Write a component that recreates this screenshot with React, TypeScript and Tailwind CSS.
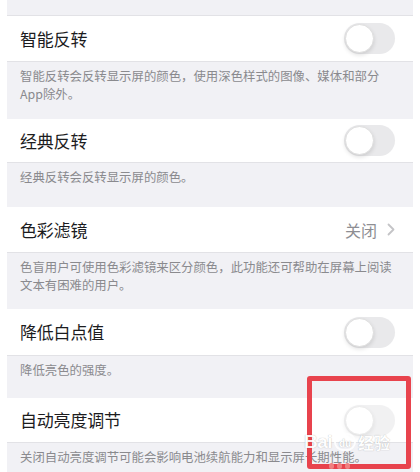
import React from "react";

const font = { fontFamily: '"Noto Sans CJK SC", "Noto Sans", sans-serif' };

function Toggle({ faded = false }: { faded?: boolean }) {
  return (
    <div
      className={`relative w-[51px] h-[31px] rounded-full bg-[#e9e9eb] ${
        faded ? "opacity-60" : ""
      }`}
    >
      <div className="absolute left-[1px] top-[1px] w-[29px] h-[29px] rounded-full bg-white border border-[#dedede] shadow-[0_2px_4px_rgba(0,0,0,0.12)]" />
    </div>
  );
}

function Row({
  title,
  height,
  right,
}: {
  title: string;
  height: string;
  right: React.ReactNode;
}) {
  return (
    <div className={`flex items-center justify-between pl-[20px] pr-[25px] bg-white ${height}`}>
      <span className="text-[17px] text-[#1c1c1e] tracking-[-0.2px]">{title}</span>
      {right}
    </div>
  );
}

function Footer({ text, height }: { text: string; height: string }) {
  return (
    <div
      className={`mx-[7px] bg-[#f1f1f5] border-t border-[#e2e2e6] pl-[13px] pr-[17px] pt-[5px] text-[12.4px] leading-[18px] text-[#8a8a8e] ${height}`}
    >
      {text}
    </div>
  );
}

export default function App() {
  return (
    <div className="relative w-[420px] h-[472px] overflow-hidden bg-white" style={font}>
      <div className="mx-[7px] h-[16px] bg-[#f1f1f5] border-b border-[#e2e2e6]" />

      <Row title="智能反转" height="h-[45px]" right={<Toggle />} />
      <Footer
        text="智能反转会反转显示屏的颜色，使用深色样式的图像、媒体和部分App除外。"
        height="h-[58px]"
      />

      <Row title="经典反转" height="h-[43px]" right={<Toggle />} />
      <Footer text="经典反转会反转显示屏的颜色。" height="h-[45px]" />

      <Row
        title="色彩滤镜"
        height="h-[45px]"
        right={
          <div className="flex items-center gap-[10px] text-[16px] text-[#8e8e93]">
            <span>关闭</span>
            <svg width="8" height="13" viewBox="0 0 8 13" fill="none">
              <path d="M1.5 1.5 L6.5 6.5 L1.5 11.5" stroke="#c4c4c7" strokeWidth="1.8" strokeLinecap="round" strokeLinejoin="round" />
            </svg>
          </div>
        }
      />
      <Footer
        text="色盲用户可使用色彩滤镜来区分颜色，此功能还可帮助在屏幕上阅读文本有困难的用户。"
        height="h-[57px]"
      />

      <Row title="降低白点值" height="h-[46px]" right={<Toggle />} />
      <Footer text="降低亮色的强度。" height="h-[43px]" />

      <Row title="自动亮度调节" height="h-[44px]" right={<Toggle faded />} />
      <Footer
        text="关闭自动亮度调节可能会影响电池续航能力和显示屏长期性能。"
        height="h-[40px]"
      />

      {/* annotation overlay */}
      <div className="absolute left-[307px] top-[376px] w-[104px] h-[93px] border-[5px] border-[#e8434d] rounded-[3px]" />

      {/* watermark */}
      <div className="absolute left-[304px] top-[428px] flex items-center gap-[2px] text-white opacity-90 [text-shadow:0_0_1px_rgba(0,0,0,0.35)]">
        <span className="text-[19px] font-bold tracking-[-0.5px]" style={{ fontFamily: '"Liberation Sans", sans-serif' }}>
          Bai
        </span>
        <span className="flex items-center justify-center w-[22px] h-[18px] rounded-full border-2 border-white text-[10px] font-bold">
          du
        </span>
        <span className="text-[16px] font-bold">经验</span>
      </div>
      <div className="absolute left-[329px] top-[463px] flex gap-[3px]">
        <div className="w-[5px] h-[6px] rounded-full bg-[#f08080]" />
        <div className="w-[5px] h-[6px] rounded-full bg-[#f08080]" />
        <div className="w-[5px] h-[6px] rounded-full bg-[#f08080]" />
      </div>
    </div>
  );
}
